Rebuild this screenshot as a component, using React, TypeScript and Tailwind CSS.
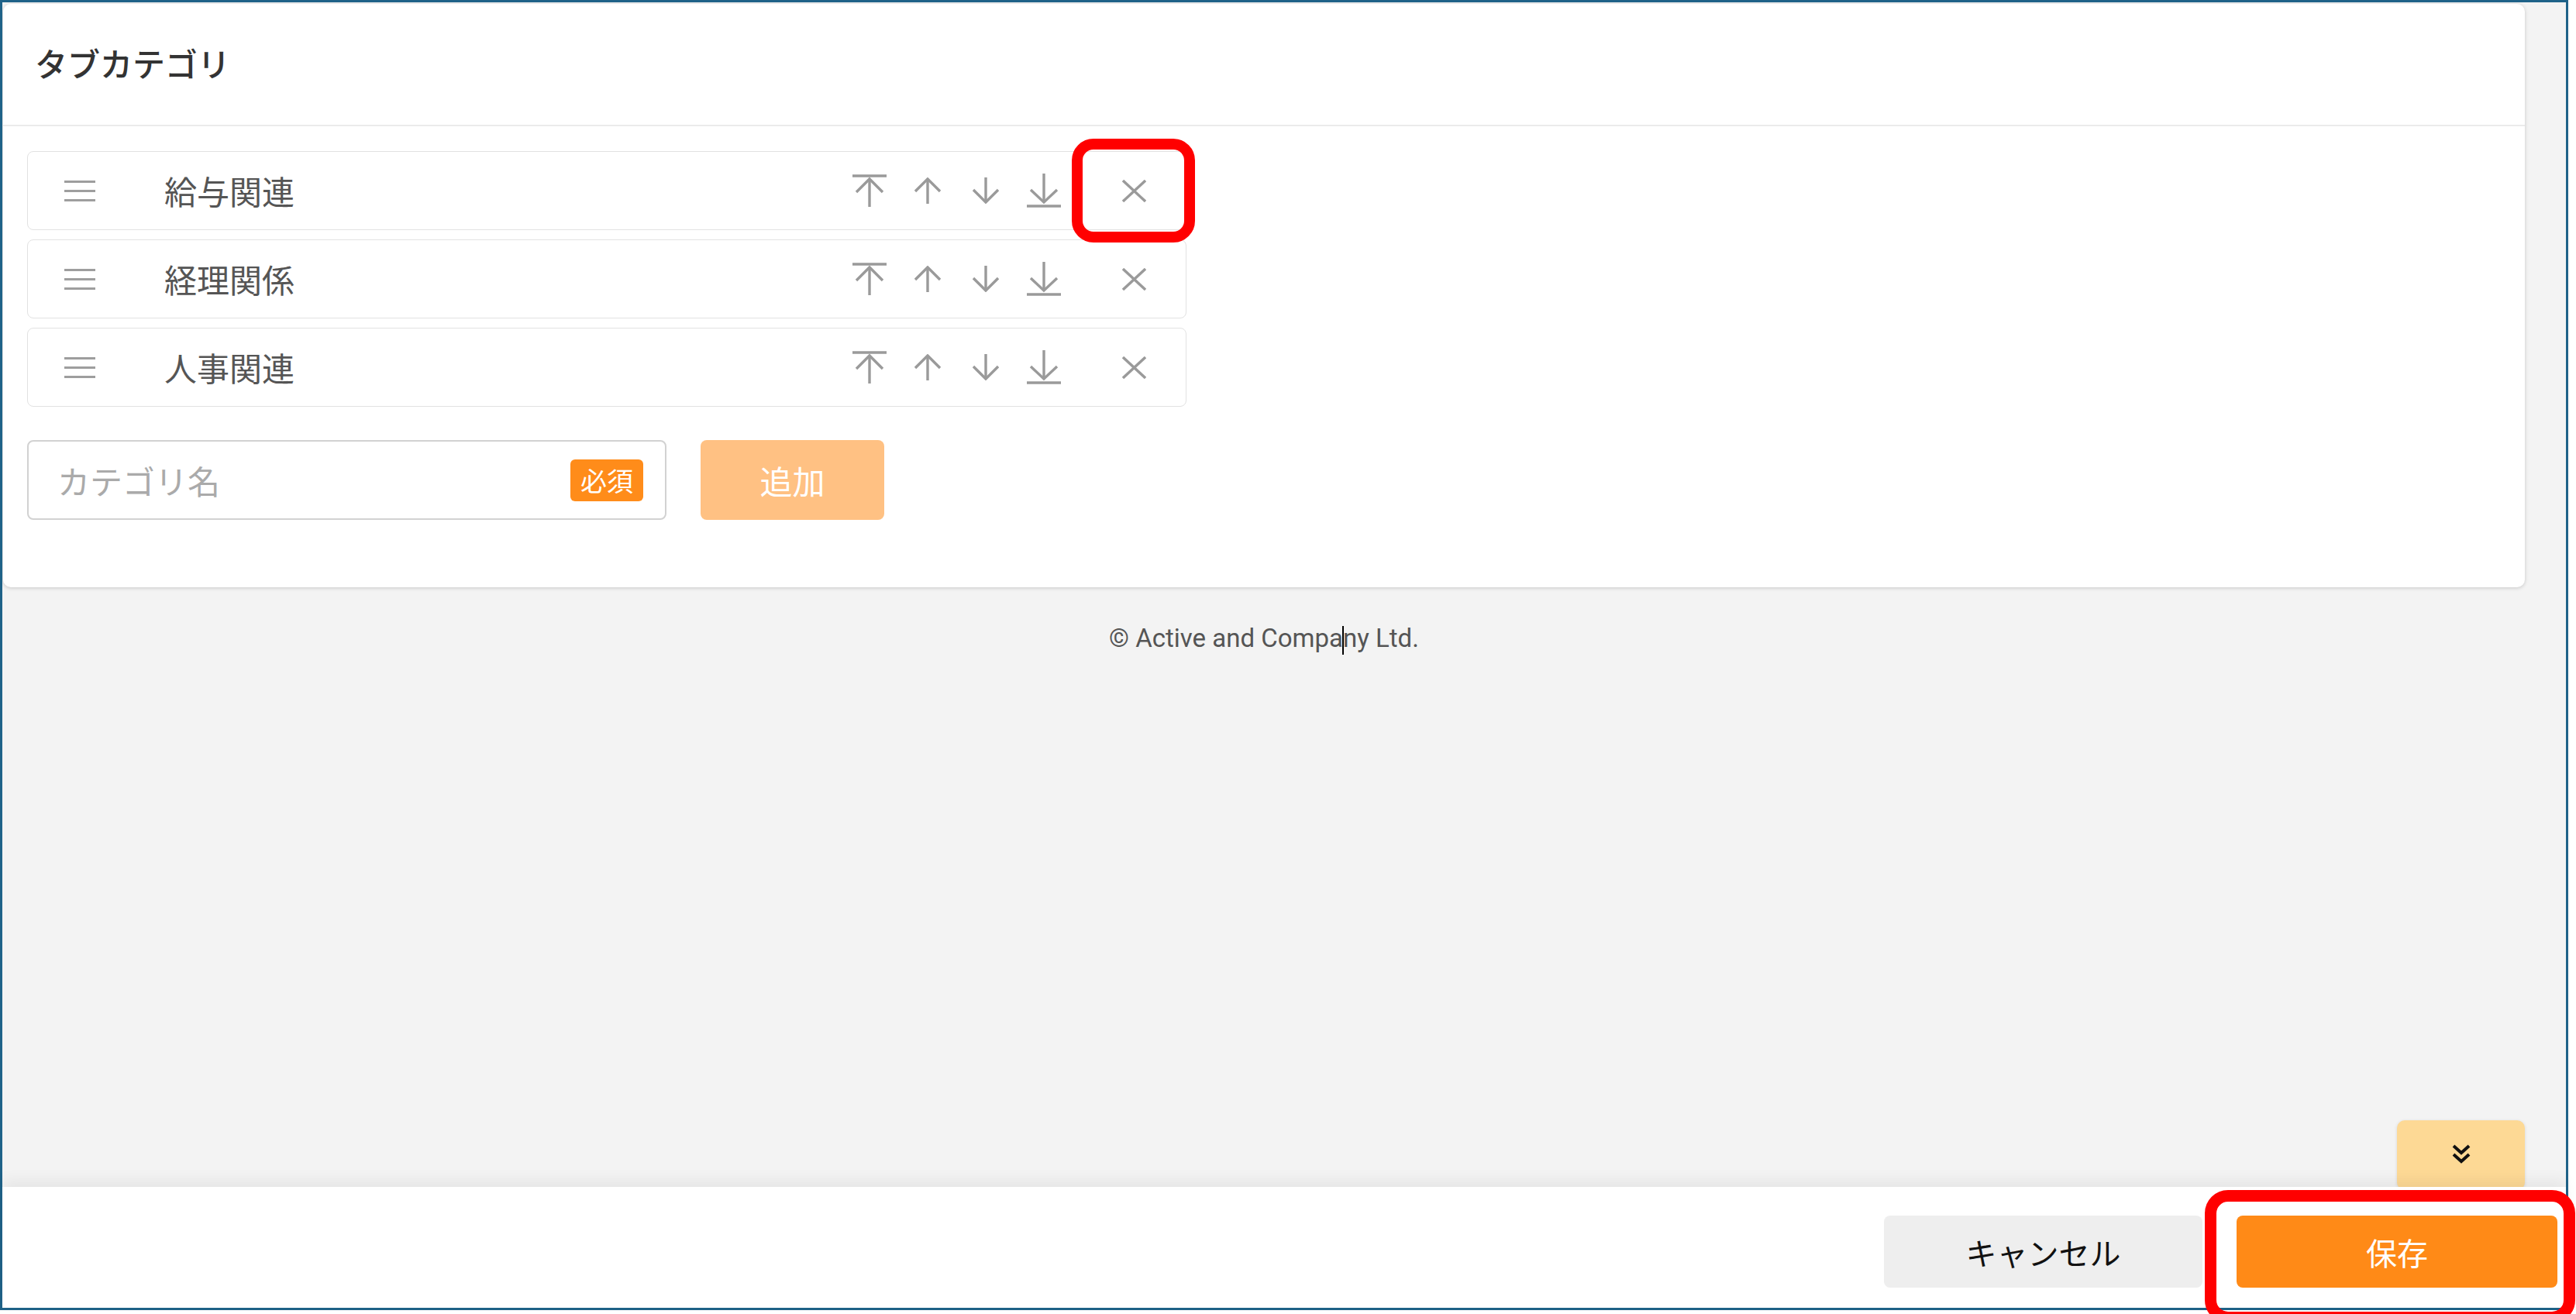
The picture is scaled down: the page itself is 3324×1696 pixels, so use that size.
import React from 'react';

const ICON = '#9a9a9a';

const TopIcon = () => (
  <svg width="44" height="42" viewBox="0 0 44 42" fill="none" stroke={ICON} strokeWidth="3.4">
    <path d="M0 2h44" />
    <path d="M22 6v36" />
    <path d="M5 23L22 6l17 17" />
  </svg>
);

const UpIcon = () => (
  <svg width="34" height="34" viewBox="0 0 34 34" fill="none" stroke={ICON} strokeWidth="3.4">
    <path d="M17 2v32" />
    <path d="M1 18L17 2l16 16" />
  </svg>
);

const DownIcon = () => (
  <svg width="34" height="34" viewBox="0 0 34 34" fill="none" stroke={ICON} strokeWidth="3.4">
    <path d="M17 0v32" />
    <path d="M1 16l16 16 16-16" />
  </svg>
);

const BottomIcon = () => (
  <svg width="44" height="44" viewBox="0 0 44 44" fill="none" stroke={ICON} strokeWidth="3.4">
    <path d="M22 0v37" />
    <path d="M5 21l17 16 17-16" />
    <path d="M0 42h44" />
  </svg>
);

const CloseIcon = () => (
  <svg width="31" height="29" viewBox="0 0 31 29" fill="none" stroke={ICON} strokeWidth="3.4">
    <path d="M1 1l29 27" />
    <path d="M30 1L1 28" />
  </svg>
);

const Handle = () => (
  <div className="w-[40px] flex flex-col gap-[9px]">
    <span className="block h-[3px] bg-[#9e9e9e]" />
    <span className="block h-[3px] bg-[#9e9e9e]" />
    <span className="block h-[3px] bg-[#9e9e9e]" />
  </div>
);

const categories = ['給与関連', '経理関係', '人事関連'];

const CategoryRow: React.FC<{ name: string }> = ({ name }) => (
  <div className="h-[102px] border border-[#e2e2e2] rounded-[8px] bg-white flex items-center pl-[47px] pr-[35px]">
    <Handle />
    <span className="ml-[89px] text-[42px] text-[#555] leading-none">{name}</span>
    <div className="flex-1" />
    <div className="w-[75px] flex justify-center"><TopIcon /></div>
    <div className="w-[75px] flex justify-center"><UpIcon /></div>
    <div className="w-[75px] flex justify-center"><DownIcon /></div>
    <div className="w-[75px] flex justify-center"><BottomIcon /></div>
    <div className="w-[64px] ml-[47px] flex justify-center"><CloseIcon /></div>
  </div>
);

export default function App() {
  return (
    <div className="w-[3324px] h-[1696px] bg-white relative overflow-hidden font-['Noto_Sans_CJK_JP','Noto_Sans',sans-serif]">
      <div className="w-[3314px] h-[1691px] border-[3px] border-[#1f6288] bg-[#f3f3f3] flex flex-col">
        {/* scrollable content */}
        <div className="flex-1 relative overflow-hidden pl-[1px] pr-[53px] pt-[2px]">
          <section className="bg-white rounded-[10px] shadow-[0_1px_5px_rgba(0,0,0,0.18)]">
            <header className="h-[158px] border-b-2 border-[#ebebeb] flex items-center pl-[41px] pb-[4px]">
              <h2 className="text-[42px] font-medium text-[#333] leading-none">タブカテゴリ</h2>
            </header>
            <div className="pt-[32px] pl-[31px] pb-[87px]">
              <div className="w-[1496px] flex flex-col gap-[12px]">
                {categories.map((c) => (
                  <CategoryRow key={c} name={c} />
                ))}
              </div>
              <div className="mt-[43px] flex gap-[44px]">
                <div className="w-[825px] h-[103px] border-2 border-[#d2d2d2] rounded-[8px] flex items-center pl-[37px] pr-[28px]">
                  <span className="flex-1 text-[42px] text-[#aaa] leading-none">カテゴリ名</span>
                  <span className="h-[54px] px-[13px] rounded-[6px] bg-[#ff8c1a] text-white text-[34px] leading-none flex items-center">必須</span>
                </div>
                <button className="w-[237px] h-[103px] rounded-[8px] bg-[#ffc183] text-white text-[42px] leading-none">追加</button>
              </div>
            </div>
          </section>
          <p className="mt-[42px] text-center font-['Roboto',sans-serif] text-[33px] leading-[48px] text-[#555]">
            © Active and Compa
            <span className="inline-block w-[2px] h-[37px] bg-black align-middle -mx-[1px]" />
            ny Ltd.
          </p>
          <button className="absolute right-[53px] bottom-[-4px] w-[165px] h-[90px] rounded-[10px] bg-[#fdd995] shadow-[0_1px_4px_rgba(0,0,0,0.12)] flex items-center justify-center pb-[2px]">
            <svg width="26" height="26" viewBox="0 0 26 26" fill="none" stroke="#111" strokeWidth="4">
              <path d="M3 2l10 9 10-9" />
              <path d="M3 13l10 9 10-9" />
            </svg>
          </button>
        </div>
        {/* action bar */}
        <div className="relative z-10 h-[156px] bg-white shadow-[0_-8px_18px_rgba(0,0,0,0.06)] flex justify-end items-start gap-[44px] pt-[37px] pr-[11px]">
          <button className="w-[411px] h-[93px] rounded-[8px] bg-[#eeeeee] text-[#111] text-[40px] leading-none">キャンセル</button>
          <button className="w-[414px] h-[93px] rounded-[8px] bg-[#ff8a17] text-white text-[40px] leading-none">保存</button>
        </div>
      </div>
      {/* annotation highlights */}
      <div className="absolute left-[1383px] top-[179px] w-[159px] h-[134px] border-[14px] border-[#ff0000] rounded-[28px]" />
      <div className="absolute left-[2845px] top-[1536px] w-[478px] h-[172px] border-[15px] border-[#ff0000] rounded-[30px] z-20" />
    </div>
  );
}
